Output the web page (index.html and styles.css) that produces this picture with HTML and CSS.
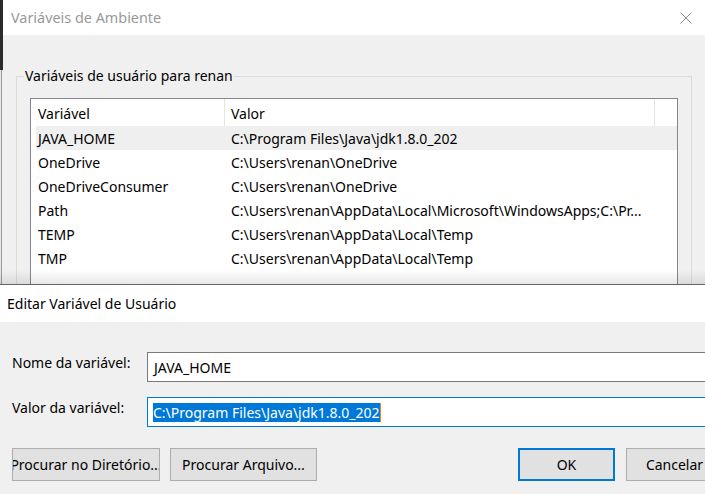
FILE: index.html
```html
<!DOCTYPE html>
<html lang="pt-BR">
<head>
<meta charset="utf-8">
<title>Variáveis de Ambiente</title>
<link rel="stylesheet" href="styles.css">
</head>
<body>
<div class="top">
  <div class="edge"></div>
  <section class="env">
    <header class="titlebar">
      <span class="title-inactive">Variáveis de Ambiente</span>
      <svg class="close" width="12" height="12" viewBox="0 0 12 12"><path d="M0.5 0.5 L11.5 11.5 M11.5 0.5 L0.5 11.5" stroke="#8c8c8c" stroke-width="1" fill="none"/></svg>
    </header>
    <div class="env-body">
      <fieldset class="group">
        <legend>Variáveis de usuário para renan</legend>
        <div class="listbox">
          <div class="lv-head"><div class="hc c1">Variável</div><div class="hc c2">Valor</div></div>
          <div class="lv-row sel"><div class="c1">JAVA_HOME</div><div class="c2">C:\Program Files\Java\jdk1.8.0_202</div></div>
          <div class="lv-row"><div class="c1">OneDrive</div><div class="c2">C:\Users\renan\OneDrive</div></div>
          <div class="lv-row"><div class="c1">OneDriveConsumer</div><div class="c2">C:\Users\renan\OneDrive</div></div>
          <div class="lv-row"><div class="c1">Path</div><div class="c2">C:\Users\renan\AppData\Local\Microsoft\WindowsApps;C:\Pr...</div></div>
          <div class="lv-row"><div class="c1">TEMP</div><div class="c2">C:\Users\renan\AppData\Local\Temp</div></div>
          <div class="lv-row"><div class="c1">TMP</div><div class="c2">C:\Users\renan\AppData\Local\Temp</div></div>
        </div>
      </fieldset>
    </div>
  </section>
  <div class="shade"></div>
</div>
<section class="edit">
  <header class="edit-title">Editar Variável de Usuário</header>
  <div class="edit-body">
    <div class="field">
      <label class="flabel">Nome da variável:</label>
      <div class="input"><span>JAVA_HOME</span></div>
    </div>
    <div class="field">
      <label class="flabel">Valor da variável:</label>
      <div class="input focus"><span class="selected">C:\Program Files\Java\jdk1.8.0_202</span></div>
    </div>
    <div class="buttons">
      <div class="btn b1">Procurar no Diretório...</div>
      <div class="btn b2">Procurar Arquivo...</div>
      <div class="btn ok">OK</div>
      <div class="btn cancel">Cancelar</div>
    </div>
  </div>
</section>
</body>
</html>
```
FILE: styles.css
```css
html, body {
  margin: 0;
  padding: 0;
}
body {
  width: 705px;
  height: 494px;
  overflow: hidden;
  background: #f0f0f0;
  font-family: "Noto Sans", "Open Sans", sans-serif;
  color: #000;
}

/* ---------- top window ---------- */
.top {
  display: flex;
  height: 284px;
  border-bottom: 1px solid #646464;
  position: relative;
  overflow: hidden;
}
.edge {
  width: 3px;
  flex: none;
  background:
    linear-gradient(#2b2b2b, #2b2b2b) top left / 100% 70px no-repeat,
    linear-gradient(90deg, #e6e6e6 0 1px, #9c9c9c 1px 2px, #f0f0f0 2px);
}
.env {
  flex: 1;
  display: flex;
  flex-direction: column;
  background: #f0f0f0;
}
.titlebar {
  height: 35px;
  flex: none;
  background: #fff;
  display: flex;
  align-items: center;
  justify-content: space-between;
  padding: 0 13px 0 8px;
}
.title-inactive {
  font-size: 14.4px;
  color: #999;
}
.close { display: block; }

.env-body {
  padding: 31px 0 0 13px;
}
.group {
  margin: 0;
  padding: 0;
  border: 1px solid #dcdcdc;
  width: 676px;
  box-sizing: border-box;
  min-width: 0;
}
.group legend {
  margin-left: 7px;
  padding: 0 1px;
  font-size: 14px;
  line-height: 20px;
}
.listbox {
  margin: 12px 0 0 13px;
  width: 648px;
  height: 220px;
  box-sizing: border-box;
  border: 1px solid #828790;
  background: #fff;
  padding-left: 5px;
  font-size: 14px;
}
.lv-head {
  display: grid;
  grid-template-columns: 189px 430px;
  height: 27px;
}
.hc {
  display: flex;
  align-items: center;
  padding-top: 2px;
  box-sizing: border-box;
  border-right: 1px solid #e5e5e5;
}
.lv-row {
  display: grid;
  grid-template-columns: 189px 430px;
  height: 24px;
  align-items: center;
}
.lv-row.sel { background: #efefef; }
.c1 { padding-left: 2px; white-space: nowrap; }
.c2 { padding-left: 6px; white-space: nowrap; }

.shade {
  position: absolute;
  left: 0;
  right: 0;
  bottom: 0;
  height: 14px;
  background: linear-gradient(rgba(0,0,0,0), rgba(0,0,0,0.09));
  pointer-events: none;
}

/* ---------- edit dialog ---------- */
.edit {
  height: 209px;
  overflow: hidden;
}
.edit-title {
  height: 37px;
  background: #fff;
  display: flex;
  align-items: center;
  padding-left: 7px;
  font-size: 14px;
}
.edit-body {
  padding: 30px 0 0 12px;
  font-size: 14px;
}
.field {
  display: flex;
  align-items: flex-start;
}
.field + .field { margin-top: 15px; }
.flabel {
  width: 135px;
  flex: none;
  line-height: 20px;
  padding-top: 1px;
}
.input {
  width: 600px;
  height: 30px;
  flex: none;
  box-sizing: border-box;
  border: 1px solid #7a7a7a;
  background: #fff;
  display: flex;
  align-items: center;
  padding-left: 6px;
}
.input.focus {
  border-color: #0078d7;
  padding-left: 5px;
}
.selected {
  background: #0078d7;
  color: #fff;
  line-height: 19px;
  border-right: 1px solid #e8862a;
}
.buttons {
  display: flex;
  width: 711px;
  margin-top: 21px;
}
.btn {
  height: 33px;
  box-sizing: border-box;
  border: 1px solid #adadad;
  background: #e1e1e1;
  display: flex;
  align-items: center;
  justify-content: center;
  overflow: hidden;
  white-space: nowrap;
  flex: none;
}
.b1 { width: 148px; }
.b2 { width: 147px; margin-left: 10px; }
.ok { width: 97px; margin-left: auto; border: 2px solid #0078d7; }
.cancel { width: 97px; margin-left: 11px; }
```
